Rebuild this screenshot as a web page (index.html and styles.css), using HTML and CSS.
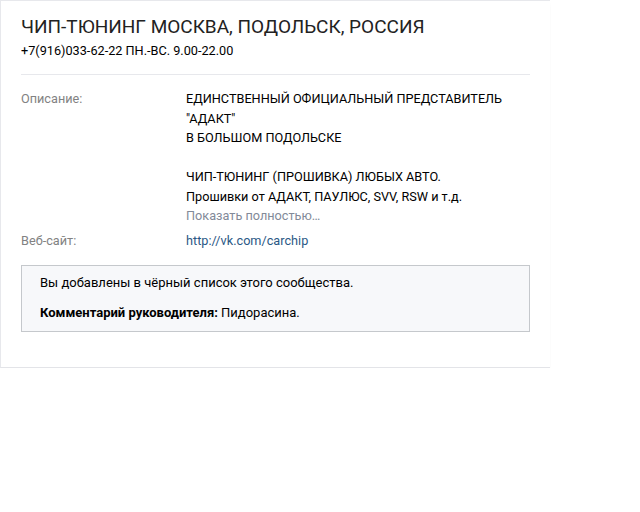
FILE: index.html
```html
<!DOCTYPE html>
<html lang="ru">
<head>
<meta charset="utf-8">
<link rel="stylesheet" href="styles.css">
</head>
<body>
<div class="card">
  <div class="head">
    <h1 class="title">ЧИП-ТЮНИНГ МОСКВА, ПОДОЛЬСК, РОССИЯ</h1>
    <div class="status">+7(916)033-62-22 ПН.-ВС. 9.00-22.00</div>
  </div>
  <div class="info">
    <div class="row">
      <div class="label">Описание:</div>
      <div class="value">ЕДИНСТВЕННЫЙ ОФИЦИАЛЬНЫЙ ПРЕДСТАВИТЕЛЬ<br>"АДАКТ"<br>В БОЛЬШОМ ПОДОЛЬСКЕ<br><br>ЧИП-ТЮНИНГ (ПРОШИВКА) ЛЮБЫХ АВТО.<br>Прошивки от АДАКТ, ПАУЛЮС, SVV, RSW и т.д.
        <div class="more">Показать полностью…</div>
      </div>
    </div>
    <div class="row">
      <div class="label">Веб-сайт:</div>
      <div class="value"><a class="link" href="#">http://vk.com/carchip</a></div>
    </div>
  </div>
  <div class="notice">
    <div class="notice-line">Вы добавлены в чёрный список этого сообщества.</div>
    <div class="notice-line"><b>Комментарий руководителя:</b> Пидорасина.</div>
  </div>
</div>
</body>
</html>
```
FILE: styles.css
```css
html, body {
  margin: 0;
  padding: 0;
  background: #fff;
}
body {
  font-family: Roboto, "Liberation Sans", sans-serif;
  font-size: 12.7px;
  color: #000;
}
.card {
  box-sizing: content-box;
  width: 509px;
  border: 1px solid #e7e8ec;
  border-right: none;
  border-bottom: 1px solid #e3e4e8;
  box-shadow: 0 3px 3px -1px rgba(0, 0, 0, 0.07);
  padding: 12px 20px 35px 20px;
}
.head {
  padding-bottom: 14px;
  border-bottom: 1px solid #e7e8ec;
}
.title {
  margin: 0;
  font-size: 19px;
  font-weight: 400;
  line-height: 28px;
  color: #222;
}
.status {
  line-height: 19px;
  color: #000;
}
.info {
  padding-top: 14px;
}
.row {
  display: flex;
  line-height: 19.5px;
}
.label {
  width: 165px;
  color: #828282;
}
.value {
  flex: 1;
}
.more {
  color: #828a99;
  margin-bottom: 5px;
}
.link {
  color: #2a5885;
  text-decoration: none;
}
.notice {
  margin-top: 15px;
  background: #f7f8fa;
  border: 1px solid #c5c8cc;
  padding: 8px 18px 3px 18px;
  font-size: 13px;
}
.notice-line {
  line-height: 17px;
  margin-bottom: 13px;
}
.notice-line:last-child {
  margin-bottom: 0;
  padding-bottom: 7px;
}
.notice b {
  font-weight: 700;
}
```
